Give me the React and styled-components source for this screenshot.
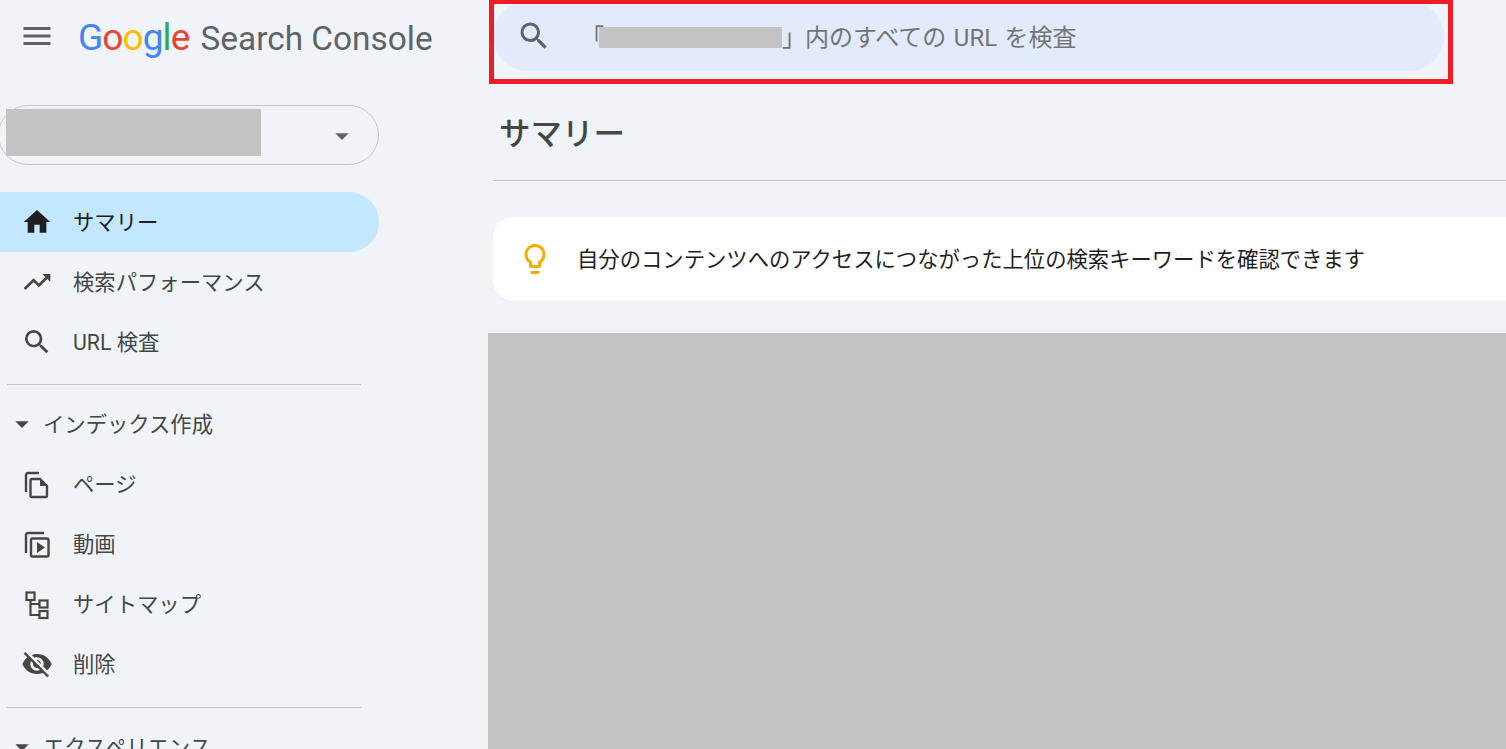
import React from 'react';
import styled, { createGlobalStyle } from 'styled-components';
import {
  MdMenu,
  MdHome,
  MdTrendingUp,
  MdSearch,
  MdArrowDropDown,
  MdVisibilityOff,
  MdLightbulbOutline,
} from 'react-icons/md';

const FONT = 'Roboto, "Noto Sans CJK JP", sans-serif';
const REDACTED = '#c3c3c3';
const LINE = '#c4c7c5';

const GlobalStyle = createGlobalStyle`
  html, body {
    margin: 0;
    height: 100%;
    overflow: hidden;
    background: #f0f4f9;
  }
  #root {
    height: 100%;
  }
`;

const Page = styled.div`
  position: relative;
  display: grid;
  grid-template-columns: 488px 1fr;
  height: 749px;
  overflow: hidden;
  font-family: ${FONT};
  font-size: 21.33px;
  background: #f0f4f9;
`;

const Sidebar = styled.aside`
  display: flex;
  flex-direction: column;
  overflow: hidden;
`;

const Brand = styled.div`
  display: flex;
  align-items: center;
  gap: 23px;
  height: 72px;
  padding-left: 19px;
  flex-shrink: 0;
  color: #5f6368;
`;

const Logo = styled.div`
  display: flex;
  align-items: baseline;
  margin-top: 3px;
  white-space: nowrap;
`;

const Google = styled.span`
  font-family: Roboto, sans-serif;
  font-size: 37px;
  font-weight: 400;
  letter-spacing: -0.9px;
  margin-right: 11px;
`;

const Letter = styled.span`
  color: ${(p) => p.$color};
`;

const Product = styled.span`
  font-family: Roboto, sans-serif;
  font-size: 33.4px;
  color: #5f6368;
`;

const PropertySelect = styled.div`
  display: flex;
  align-items: flex-start;
  box-sizing: border-box;
  width: 381px;
  height: 60px;
  margin: 33px 0 27px -2px;
  padding: 3px 20px 0 7px;
  border: 1px solid ${LINE};
  border-radius: 30px;
  flex-shrink: 0;
  color: #5f6368;
`;

const PropertyName = styled.div`
  width: 255px;
  height: 47px;
  background: ${REDACTED};
`;

const SelectCaret = styled.div`
  display: flex;
  margin: 11px 0 0 auto;
`;

const NavRow = styled.div`
  display: flex;
  align-items: center;
  gap: 20px;
  box-sizing: border-box;
  width: 379px;
  height: 60px;
  padding-left: 21px;
  flex-shrink: 0;
  border-radius: 0 30px 30px 0;
  color: ${(p) => (p.$active ? '#1f1f1f' : '#444746')};
  background: ${(p) => (p.$active ? '#c2e7ff' : 'transparent')};
`;

// the CJK font sits low in its line box, this brings the text back to the icon's centre
const Label = styled.span`
  padding-bottom: 4px;
`;

const Divider = styled.div`
  width: 354px;
  height: 1px;
  margin: ${(p) => p.$margin};
  margin-left: 7px;
  flex-shrink: 0;
  background: ${LINE};
`;

const SectionRow = styled.div`
  display: flex;
  align-items: center;
  gap: 5px;
  height: 60px;
  padding-left: 6px;
  flex-shrink: 0;
  color: #444746;
`;

const Main = styled.main`
  display: flex;
  flex-direction: column;
  min-width: 0;
  overflow: hidden;
`;

const SearchBar = styled.div`
  display: flex;
  align-items: center;
  box-sizing: border-box;
  width: 951px;
  height: 70px;
  margin: 1px 0 0 5px;
  padding-left: 23px;
  border-radius: 35px;
  flex-shrink: 0;
  background: #e1ebfc;
  color: #5f6368;
`;

const Placeholder = styled.div`
  display: flex;
  align-items: center;
  margin-left: 28px;
  font-size: 24px;
  color: #757575;
  white-space: nowrap;
`;

const PlaceholderText = styled.span`
  padding-bottom: 1px;
  word-spacing: 1.5px;
`;

const RedactedUrl = styled.span`
  width: 183px;
  height: 21px;
  margin: 3px 0 0 -5px;
  background: ${REDACTED};
`;

const Closing = styled(PlaceholderText)`
  margin-right: -1px;
`;

const TitleBar = styled.div`
  display: flex;
  align-items: center;
  box-sizing: border-box;
  height: 110px;
  margin-left: 5px;
  padding: 20px 0 10px 6px;
  border-bottom: 1px solid ${LINE};
  flex-shrink: 0;
`;

const Title = styled.h1`
  margin: 0;
  font-size: 31.5px;
  font-weight: 500;
  color: #444746;
`;

const Banner = styled.div`
  display: flex;
  align-items: center;
  gap: 24px;
  height: 84px;
  margin: 36px -40px 0 5px;
  padding-left: 24px;
  border-radius: 21px;
  flex-shrink: 0;
  background: #ffffff;
  color: #1f1f1f;
`;

const BulbIcon = styled(MdLightbulbOutline)`
  color: #f9ab00;
  flex-shrink: 0;
`;

const RedactedChart = styled.div`
  flex: 1;
  margin-top: 32px;
  background: ${REDACTED};
`;

// annotation drawn on top of the search bar in the screenshot
const Highlight = styled.div`
  position: absolute;
  left: 489px;
  top: -1px;
  box-sizing: border-box;
  width: 964px;
  height: 85px;
  border: 5px solid #ee1c25;
  pointer-events: none;
`;

const PagesIcon = () => (
  <svg width="32" height="32" viewBox="0 0 32 32" fill="none" stroke="currentColor" strokeWidth="2.4">
    <path d="M5 24V7a2 2 0 0 1 2-2h11" />
    <path d="M11 11h8l7 7v9.5a1.5 1.5 0 0 1-1.5 1.5H11a1.5 1.5 0 0 1-1.5-1.5v-15A1.5 1.5 0 0 1 11 11z" />
    <path d="M19 11v7h7z" fill="currentColor" stroke="none" />
  </svg>
);

const VideoIcon = () => (
  <svg width="32" height="32" viewBox="0 0 32 32" fill="none" stroke="currentColor" strokeWidth="2.4">
    <path d="M5 25V7a2 2 0 0 1 2-2h16" />
    <rect x="10" y="10.5" width="17.5" height="18" rx="1.5" />
    <path d="M16 14l8 5.5-8 5.5z" fill="currentColor" stroke="none" />
  </svg>
);

const SitemapIcon = () => (
  <svg width="32" height="32" viewBox="0 0 32 32" fill="none" stroke="currentColor" strokeWidth="2.2">
    <rect x="5.5" y="4.5" width="8" height="7.5" />
    <rect x="18.5" y="12.5" width="8" height="7" />
    <rect x="18.5" y="23" width="8" height="7" />
    <path d="M9.5 12v15h9M9.5 16h9" />
  </svg>
);

const mainNav = [
  { label: 'サマリー', icon: <MdHome size={32} />, active: true },
  { label: '検索パフォーマンス', icon: <MdTrendingUp size={32} /> },
  { label: 'URL 検査', icon: <MdSearch size={32} /> },
];

const indexNav = [
  { label: 'ページ', icon: <PagesIcon /> },
  { label: '動画', icon: <VideoIcon /> },
  { label: 'サイトマップ', icon: <SitemapIcon /> },
  { label: '削除', icon: <MdVisibilityOff size={32} /> },
];

const googleLetters = [
  ['G', '#4285f4'],
  ['o', '#ea4335'],
  ['o', '#fbbc05'],
  ['g', '#4285f4'],
  ['l', '#34a853'],
  ['e', '#ea4335'],
];

const renderRow = (item) => (
  <NavRow key={item.label} $active={item.active}>
    {item.icon}
    <Label>{item.label}</Label>
  </NavRow>
);

export default function App() {
  return (
    <Page>
      <GlobalStyle />
      <Sidebar>
        <Brand>
          <MdMenu size={36} />
          <Logo>
            <Google>
              {googleLetters.map(([letter, color], i) => (
                <Letter key={i} $color={color}>{letter}</Letter>
              ))}
            </Google>
            <Product>Search Console</Product>
          </Logo>
        </Brand>
        <PropertySelect>
          <PropertyName />
          <SelectCaret>
            <MdArrowDropDown size={32} />
          </SelectCaret>
        </PropertySelect>
        {mainNav.map(renderRow)}
        <Divider $margin="12px 0 9px" />
        <SectionRow>
          <MdArrowDropDown size={32} />
          <Label>インデックス作成</Label>
        </SectionRow>
        {indexNav.map(renderRow)}
        <Divider $margin="13px 0 9px" />
        <SectionRow>
          <MdArrowDropDown size={32} />
          <Label>エクスペリエンス</Label>
        </SectionRow>
      </Sidebar>
      <Main>
        <SearchBar>
          <MdSearch size={36} />
          <Placeholder>
            <PlaceholderText>「</PlaceholderText>
            <RedactedUrl />
            <Closing>」</Closing>
            <PlaceholderText>内のすべての URL を検査</PlaceholderText>
          </Placeholder>
        </SearchBar>
        <TitleBar>
          <Title>サマリー</Title>
        </TitleBar>
        <Banner>
          <BulbIcon size={36} />
          <Label>自分のコンテンツへのアクセスにつながった上位の検索キーワードを確認できます</Label>
        </Banner>
        <RedactedChart />
      </Main>
      <Highlight />
    </Page>
  );
}
